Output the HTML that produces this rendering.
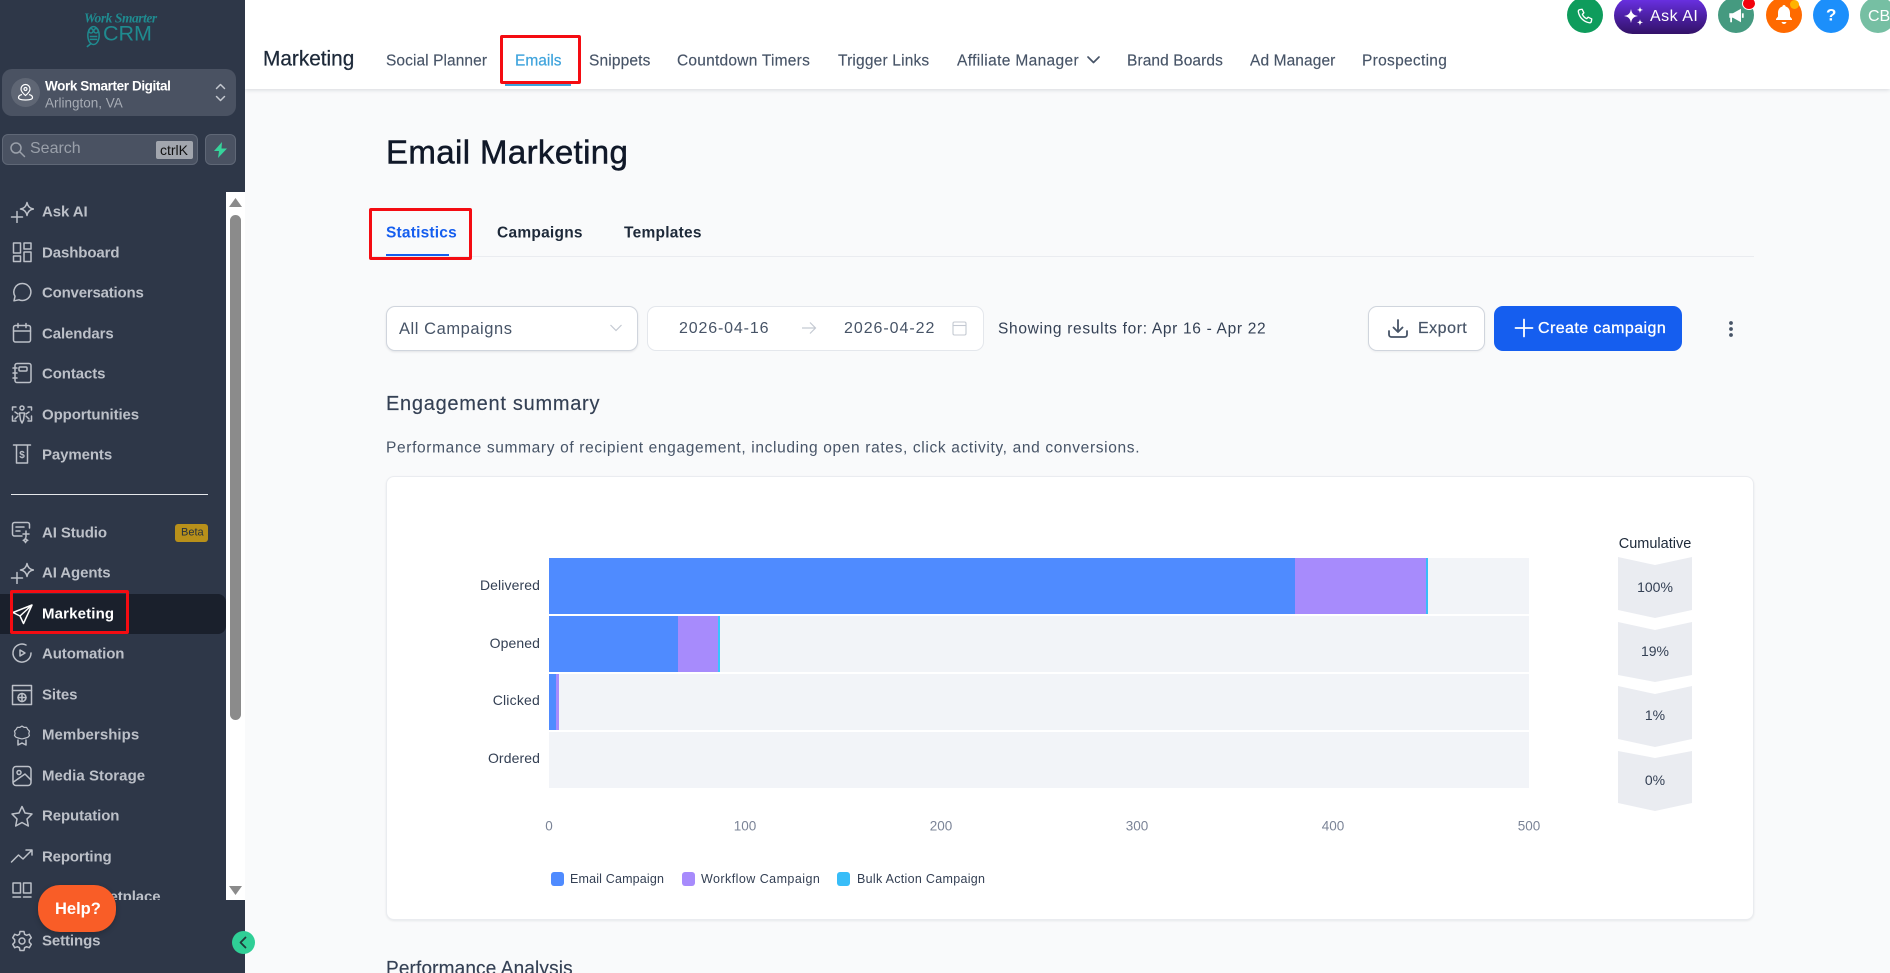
<!DOCTYPE html>
<html lang="en">
<head>
<meta charset="utf-8">
<title>Email Marketing</title>
<style>
html,body{margin:0;padding:0;width:1890px;height:973px;overflow:hidden;background:#f9fafb;font-family:"Liberation Sans",sans-serif}
*{box-sizing:border-box}
#wrap{position:relative;width:1890px;height:973px;overflow:hidden;background:#f9fafb}
.a{position:absolute;white-space:nowrap}
.t{position:absolute;white-space:nowrap;transform:translateY(-50%);line-height:1}
#side{position:absolute;left:0;top:0;width:245px;height:973px;background:#2e3748;overflow:hidden}
.ni{position:absolute;left:42px;margin-top:1px;transform:translateY(-50%);font-size:15px;font-weight:700;color:#bcc0c8;line-height:1;white-space:nowrap;letter-spacing:-.1px}
.ic{position:absolute;left:10px;width:24px;height:24px;fill:none;stroke:#bcc0c8;stroke-width:1.5;stroke-linecap:round;stroke-linejoin:round}
.nav{position:absolute;top:61px;transform:translateY(-50%);font-size:15.5px;color:#475467;line-height:1;white-space:nowrap;-webkit-text-stroke:.15px #475467}
.row{position:absolute;left:549px;width:980px;height:56px;background:#f2f4f8}
.seg{position:absolute;top:0;height:100%}
.yl{position:absolute;right:1350px;transform:translateY(-50%);font-size:14px;color:#344054;line-height:1;letter-spacing:.1px}
.xl{position:absolute;top:826px;transform:translate(-50%,-50%);font-size:13.5px;color:#7b8497;line-height:1}
.lg{position:absolute;top:879px;transform:translateY(-50%);font-size:12.5px;color:#344054;line-height:1;white-space:nowrap;letter-spacing:.25px}
.sw{position:absolute;top:872px;width:13px;height:14px;border-radius:3px}
.cv{position:absolute;left:1618px;width:74px;text-align:center;transform:translateY(-50%);font-size:13.5px;color:#344054;line-height:1}
.circ{position:absolute;top:-3px;width:36px;height:36px;border-radius:50%}
</style>
</head>
<body>
<div id="wrap">

<!-- Top nav -->
<div class="a" style="left:245px;top:0;width:1645px;height:89px;background:#fff;box-shadow:0 1px 4px rgba(16,24,40,.14)"></div>
<div class="t" style="left:263px;top:60px;font-size:20.8px;font-weight:400;color:#1d2939;-webkit-text-stroke:.25px #1d2939">Marketing</div>
<div class="nav" style="left:386px;letter-spacing:.08px">Social Planner</div>
<div class="nav" style="left:515px;color:#3ea3dc;-webkit-text-stroke:.2px #3ea3dc">Emails</div>
<div class="nav" style="left:589px;letter-spacing:.15px">Snippets</div>
<div class="nav" style="left:677px;letter-spacing:.24px">Countdown Timers</div>
<div class="nav" style="left:838px;letter-spacing:.18px">Trigger Links</div>
<div class="nav" style="left:957px;letter-spacing:.35px">Affiliate Manager</div>
<svg class="a" style="left:1086px;top:54px" width="15" height="12" viewBox="0 0 15 12" fill="none" stroke="#475467" stroke-width="1.7" stroke-linecap="round" stroke-linejoin="round"><path d="M2 3l5.500 5.500L13 3"/></svg>
<div class="nav" style="left:1127px;letter-spacing:.1px">Brand Boards</div>
<div class="nav" style="left:1250px;letter-spacing:.1px">Ad Manager</div>
<div class="nav" style="left:1362px;letter-spacing:.3px">Prospecting</div>
<div class="a" style="left:505px;top:83px;width:66px;height:3px;background:#3ea3dc"></div>
<div class="a" style="left:500px;top:35px;width:81px;height:49px;border:3.5px solid #f40c12;border-radius:2px"></div>

<!-- Top right icons -->
<div class="circ" style="left:1567px;background:#0e9c5c"></div>
<svg class="a" style="left:1576px;top:7px" width="18" height="18" viewBox="0 0 24 24" fill="none" stroke="#fff" stroke-width="1.8" stroke-linecap="round" stroke-linejoin="round"><path d="M5 3.500l3.200-.5 2.300 4.800-2 1.800c1 2.600 3 4.700 5.800 6l1.900-2 4.800 2.300-.5 3.200c-.3 1.300-1.500 2.100-2.800 1.900C10.200 19.700 4.400 13.900 3.100 6.300 2.900 5 3.700 3.800 5 3.500z"/></svg>
<div class="a" style="left:1614px;top:-3px;width:93px;height:37px;border-radius:19px;background:linear-gradient(180deg,#6d32ea 0%,#4a1fa0 55%,#331268 100%)"></div>
<svg class="a" style="left:1624px;top:5px" width="20" height="22" viewBox="0 0 20 22" fill="#fff"><path d="M7 4c.8 4.500 2.500 6.200 7 7-4.500.8-6.200 2.500-7 7-.8-4.500-2.500-6.200-7-7 4.500-.8 6.200-2.500 7-7z"/><path d="M16 1.500c.3 2.300.9 3 3.200 3.500-2.300.3-3 .9-3.200 3.500-.3-2.600-.9-3.200-3.200-3.500 2.300-.5 2.900-1.200 3.200-3.500zM16 14c.3 2.300.9 3 3.200 3.500-2.300.3-3 .9-3.200 3.500-.3-2.600-.9-3.200-3.200-3.500 2.300-.5 2.900-1.200 3.200-3.500z"/></svg>
<div class="t" style="left:1650px;top:17px;font-size:16px;color:#fff;letter-spacing:.5px">Ask AI</div>
<div class="circ" style="left:1718px;background:#459a80"></div>
<svg class="a" style="left:1728px;top:7px" width="17" height="18" viewBox="0 0 18 20"><path d="M1 7h4l9-5v15l-9-5H4v5H2v-5H1z" fill="#fff"/><rect x="15" y="7" width="2" height="5" fill="#fff"/></svg>
<div class="a" style="left:1742px;top:-3px;width:14px;height:13px;border-radius:50%;background:#f2020c;border:1px solid #fff"></div>
<div class="circ" style="left:1766px;background:#ff6a00"></div>
<svg class="a" style="left:1774px;top:4px" width="20" height="22" viewBox="0 0 20 22" fill="#fff"><path d="M10 1c1 0 1.600.7 1.600 1.500C14.500 3.300 16 5.800 16 8.800v3.700l2 2.500v1H2v-1l2-2.500V8.800c0-3 1.500-5.500 4.400-6.300C8.400 1.700 9 1 10 1z"/><path d="M7.500 18h5c-.4 1.200-1.300 2-2.500 2s-2.100-.8-2.500-2z"/></svg>
<div class="a" style="left:1790px;top:0;width:9px;height:9px;border-radius:50%;background:#ffb300"></div>
<div class="circ" style="left:1813px;background:#1c8ffb"></div>
<div class="t" style="left:1826px;top:15px;font-size:17px;font-weight:700;color:#fff">?</div>
<div class="circ" style="left:1860px;background:#76bfa3"></div>
<div class="t" style="left:1868px;top:17px;font-size:16px;color:#fff">CB</div>

<!-- Main header -->
<div class="t" style="left:386px;top:152px;font-size:33px;color:#101828;-webkit-text-stroke:.5px #101828;letter-spacing:.38px">Email Marketing</div>
<div class="a" style="left:369px;top:256px;width:1385px;height:1px;background:#eaecf0"></div>
<div class="t" style="left:386px;top:233px;font-size:15.5px;font-weight:700;color:#155eef;letter-spacing:.2px">Statistics</div>
<div class="t" style="left:497px;top:233px;font-size:15.5px;font-weight:700;color:#1d2939;letter-spacing:.25px">Campaigns</div>
<div class="t" style="left:624px;top:233px;font-size:15.5px;font-weight:700;color:#1d2939;letter-spacing:.25px">Templates</div>
<div class="a" style="left:386px;top:254px;width:63px;height:2px;background:#155eef"></div>
<div class="a" style="left:369px;top:208px;width:103px;height:52px;border:3.5px solid #f40c12;border-radius:2px"></div>

<!-- Filters -->
<div class="a" style="left:386px;top:306px;width:252px;height:45px;background:#fff;border:1px solid #d0d5dd;border-radius:9px;box-shadow:0 1px 2px rgba(16,24,40,.1)"></div>
<div class="t" style="left:399px;top:329px;font-size:16.5px;color:#475467;letter-spacing:.55px">All Campaigns</div>
<svg class="a" style="left:609px;top:323px" width="14" height="10" viewBox="0 0 14 10" fill="none" stroke="#c4c9d2" stroke-width="1.2"><path d="M1.500 2l5.500 5.500L12.500 2"/></svg>
<div class="a" style="left:647px;top:306px;width:337px;height:45px;background:#fff;border:1px solid #e4e7ec;border-radius:9px"></div>
<div class="t" style="left:679px;top:329px;font-size:16px;color:#475467;letter-spacing:.85px">2026-04-16</div>
<svg class="a" style="left:801px;top:321px" width="16" height="14" viewBox="0 0 16 14" fill="none" stroke="#c4c9d2" stroke-width="1.2"><path d="M1 7h13.500M9 1.500L14.500 7 9 12.500"/></svg>
<div class="t" style="left:844px;top:329px;font-size:16px;color:#475467;letter-spacing:.95px">2026-04-22</div>
<svg class="a" style="left:952px;top:321px" width="15" height="15" viewBox="0 0 15 15" fill="none" stroke="#c4c9d2" stroke-width="1.1"><rect x="1" y="1" width="13" height="13" rx="1.500"/><path d="M1 4.500h13"/></svg>
<div class="t" style="left:998px;top:329px;font-size:15.5px;color:#344054;letter-spacing:.68px">Showing results for: Apr 16 - Apr 22</div>

<div class="a" style="left:1368px;top:306px;width:117px;height:45px;background:#fff;border:1px solid #d0d5dd;border-radius:9px;box-shadow:0 1px 2px rgba(16,24,40,.06)"></div>
<svg class="a" style="left:1387px;top:318px" width="22" height="22" viewBox="0 0 22 22" fill="none" stroke="#475467" stroke-width="1.800" stroke-linecap="round" stroke-linejoin="round"><path d="M2 13v3.500c0 1.400 1 2.500 2.500 2.500h13c1.500 0 2.500-1.100 2.500-2.500V13M11 2v12M6.500 9.500L11 14l4.500-4.500"/></svg>
<div class="t" style="left:1418px;top:329px;font-size:16px;color:#475467;-webkit-text-stroke:.2px #475467;letter-spacing:.5px">Export</div>
<div class="a" style="left:1494px;top:306px;width:188px;height:45px;background:#155eef;border-radius:9px"></div>
<svg class="a" style="left:1514px;top:318px" width="20" height="20" viewBox="0 0 20 20" fill="none" stroke="#fff" stroke-width="1.800" stroke-linecap="round"><path d="M10 1.500v17M1.500 10h17"/></svg>
<div class="t" style="left:1538px;top:329px;font-size:16px;color:#fff;font-weight:400;-webkit-text-stroke:.3px #fff;letter-spacing:.42px">Create campaign</div>
<svg class="a" style="left:1727px;top:320px" width="8" height="18" viewBox="0 0 8 18" fill="#475467"><circle cx="4" cy="3" r="1.900"/><circle cx="4" cy="9" r="1.900"/><circle cx="4" cy="15" r="1.900"/></svg>

<div class="t" style="left:386px;top:404px;font-size:20px;color:#344054;letter-spacing:.72px;-webkit-text-stroke:.15px #344054">Engagement summary</div>
<div class="t" style="left:386px;top:448px;font-size:15.500px;color:#475467;letter-spacing:.65px">Performance summary of recipient engagement, including open rates, click activity, and conversions.</div>

<!-- Chart card -->
<div class="a" style="left:386px;top:476px;width:1368px;height:444px;background:#fff;border:1px solid #eaecf0;border-radius:8px;box-shadow:0 1px 2px rgba(16,24,40,.08)"></div>
<div class="row" style="top:558px"><div class="seg" style="left:0;width:746px;background:#4f8bff"></div><div class="seg" style="left:746px;width:131px;background:#a78bfc"></div><div class="seg" style="left:877px;width:1.500px;background:#38bdf8"></div></div>
<div class="row" style="top:616px"><div class="seg" style="left:0;width:129px;background:#4f8bff"></div><div class="seg" style="left:129px;width:40px;background:#a78bfc"></div><div class="seg" style="left:169px;width:2px;background:#38c5ff"></div></div>
<div class="row" style="top:674px"><div class="seg" style="left:0;width:7px;background:#4f8bff"></div><div class="seg" style="left:7px;width:3px;background:#a78bfc"></div></div>
<div class="row" style="top:732px"></div>

<div class="yl" style="top:585px">Delivered</div>
<div class="yl" style="top:643px">Opened</div>
<div class="yl" style="top:700px;letter-spacing:.2px">Clicked</div>
<div class="yl" style="top:758px">Ordered</div>
<div class="xl" style="left:549px">0</div>
<div class="xl" style="left:745px">100</div>
<div class="xl" style="left:941px">200</div>
<div class="xl" style="left:1137px">300</div>
<div class="xl" style="left:1333px">400</div>
<div class="xl" style="left:1529px">500</div>

<div class="sw" style="left:551px;background:#4f8bff"></div><div class="lg" style="left:570px;letter-spacing:.17px">Email Campaign</div>
<div class="sw" style="left:682px;background:#a78bfc"></div><div class="lg" style="left:701px;letter-spacing:.45px">Workflow Campaign</div>
<div class="sw" style="left:837px;background:#38bdf8"></div><div class="lg" style="left:857px;letter-spacing:.3px">Bulk Action Campaign</div>

<div class="cv" style="top:544px;color:#1d2939;left:1613px;width:84px;font-size:14.500px">Cumulative</div>
<svg class="a" style="left:1618px;top:557px" width="74" height="256" viewBox="0 0 74 256" fill="#eaecf1"><path d="M0 0l37 8 37-8v53l-37 8-37-8z"/><path d="M0 65l37 8 37-8v53l-37 7-37-7z"/><path d="M0 129l37 8 37-8v53l-37 8-37-8z"/><path d="M0 194l37 7 37-7v52l-37 8-37-8z"/></svg>
<div class="cv" style="top:587px;font-size:14px">100%</div>
<div class="cv" style="top:651px;font-size:14px">19%</div>
<div class="cv" style="top:715px;font-size:14px">1%</div>
<div class="cv" style="top:780px;font-size:14px">0%</div>

<div class="t" style="left:386px;top:969px;font-size:19px;color:#344054;letter-spacing:.15px;-webkit-text-stroke:.15px #344054">Performance Analysis</div>

<!-- Sidebar -->
<div id="side">
  <div class="t" style="left:84px;top:18px;font-family:'Liberation Serif',serif;font-style:italic;font-weight:700;font-size:13.5px;color:#1f8a8f;letter-spacing:-.45px">Work Smarter</div>
  <svg class="a" style="left:85px;top:25px" width="17" height="23" viewBox="0 0 18 24" fill="none" stroke="#1f8a8f" stroke-width="1.600"><ellipse cx="9" cy="11" rx="6" ry="9.500"/><circle cx="6.300" cy="6" r="2.300"/><circle cx="11.700" cy="6" r="2.300"/><path d="M5 12h8M5 15h8M2 23l5-4"/></svg>
  <div class="t" style="left:103px;top:34px;font-size:21.500px;color:#1f8a8f">CRM</div>

  <div class="a" style="left:2px;top:69px;width:234px;height:47px;background:#4a5262;border-radius:10px"></div>
  <div class="a" style="left:11px;top:78px;width:29px;height:29px;border-radius:50%;background:#5f6674"></div>
  <svg class="a" style="left:17px;top:83px" width="17" height="19" viewBox="0 0 17 19" fill="none" stroke="#fff" stroke-width="1.200"><path d="M8.500 1.500a4.500 4.500 0 0 1 4.500 4.500c0 3-4.500 6.500-4.500 6.500S4 9 4 6a4.500 4.500 0 0 1 4.500-4.500z"/><circle cx="8.500" cy="6" r="1.500"/><path d="M5 11.500C3 12 1.500 13 1.500 14.500c0 1.800 3 2.500 7 2.500s7-.7 7-2.500c0-1.500-1.500-2.500-3.500-3"/></svg>
  <div class="t" style="left:45px;top:86px;font-size:13.500px;font-weight:700;color:#fff;letter-spacing:-.39px">Work Smarter Digital</div>
  <div class="t" style="left:45px;top:103px;font-size:13.500px;color:#a7acb5">Arlington, VA</div>
  <svg class="a" style="left:214px;top:82px" width="13" height="21" viewBox="0 0 13 21" fill="none" stroke="#c4c8cf" stroke-width="1.500" stroke-linecap="round" stroke-linejoin="round"><path d="M2.500 6.500L6.500 2.500l4 4M2.500 14.500l4 4 4-4"/></svg>

  <div class="a" style="left:2px;top:134px;width:196px;height:31px;background:#4a5262;border:1px solid #5f6776;border-radius:6px"></div>
  <svg class="a" style="left:9px;top:141px" width="17" height="17" viewBox="0 0 17 17" fill="none" stroke="#9aa0aa" stroke-width="1.500" stroke-linecap="round"><circle cx="7" cy="7" r="5"/><path d="M11 11l4.500 4.500"/></svg>
  <div class="t" style="left:30px;top:149px;font-size:16px;color:#9aa0aa">Search</div>
  <div class="a" style="left:156px;top:141px;width:37px;height:18px;background:#a2a6ae;border-radius:2px"></div>
  <div class="t" style="left:160px;top:150px;font-size:14px;color:#111">ctrlK</div>
  <div class="a" style="left:205px;top:134px;width:31px;height:31px;background:#4a5262;border:1px solid #5f6776;border-radius:6px"></div>
  <svg class="a" style="left:214px;top:142px" width="13" height="16" viewBox="0 0 13 16" fill="#36d39b"><path d="M8 0L0 9h5l-1 7 9-9.500H7.500z"/></svg>

  <!-- scrollbar -->
  <div class="a" style="left:226px;top:192px;width:19px;height:708px;background:#fff"></div>
  <div class="a" style="left:230px;top:215px;width:11px;height:505px;background:#8b8b8b;border-radius:6px"></div>
  <svg class="a" style="left:229px;top:198px" width="13" height="10"><path d="M6.500 0L13 9H0z" fill="#8b8b8b"/></svg>
  <svg class="a" style="left:229px;top:886px" width="13" height="10"><path d="M0 0h13L6.500 9z" fill="#8b8b8b"/></svg>

  <!-- active -->
  <div class="a" style="left:0;top:594px;width:226px;height:40px;background:#1a202c;border-radius:0 8px 8px 0"></div>

  <!-- items -->
  <svg class="ic" style="top:199px" viewBox="0 0 24 24"><path d="M17 3.500c.6 3.300 2.200 5.900 6.500 6.500-4.300.6-5.900 3.200-6.500 6.500-.6-3.300-2.200-5.900-6.500-6.500 4.300-.6 5.900-3.200 6.500-6.500zM7 12.500v11M1.500 18h11"/></svg>
  <div class="ni" style="top:211px">Ask AI</div>
  <svg class="ic" style="top:240px" viewBox="0 0 24 24"><rect x="3.500" y="3" width="7" height="10"/><rect x="14" y="3" width="7" height="6"/><rect x="3.500" y="16" width="7" height="5.500"/><rect x="14" y="12" width="7" height="9.500"/></svg>
  <div class="ni" style="top:252px">Dashboard</div>
  <svg class="ic" style="top:280px" viewBox="0 0 24 24"><path d="M12.500 3.500a8.500 8.500 0 1 1-3.500 16.300l-5 1 1-4.500a8.500 8.500 0 0 1 7.500-12.800z"/></svg>
  <div class="ni" style="top:292px;letter-spacing:-.2px">Conversations</div>
  <svg class="ic" style="top:321px" viewBox="0 0 24 24"><rect x="3.500" y="4.500" width="17" height="16.500" rx="2"/><path d="M3.500 10h17M8 2.500v4M16 2.500v4"/></svg>
  <div class="ni" style="top:333px">Calendars</div>
  <svg class="ic" style="top:361px" viewBox="0 0 24 24"><rect x="5" y="2.500" width="16" height="19" rx="2"/><rect x="9" y="6" width="8" height="4" rx="1"/><path d="M3 7h4M3 12h4M3 17h4"/></svg>
  <div class="ni" style="top:373px">Contacts</div>
  <svg class="ic" style="top:402px" viewBox="0 0 24 24"><circle cx="12" cy="6" r="2"/><path d="M9.500 11h5l-1 7-1.500 3-1.500-3zM2.500 8V5h3.500M21.500 8V5H18M2.500 14v5H6M21.500 14v5H18M5 10l3 2M19 10l-3 2M5 17l3-3M19 17l-3-3"/></svg>
  <div class="ni" style="top:414px">Opportunities</div>
  <svg class="ic" style="top:442px" viewBox="0 0 24 24"><path d="M3.500 3h17M6.500 3v18h11V3"/><text x="12" y="16" font-size="10" font-weight="700" fill="#bcc0c8" stroke="none" text-anchor="middle">$</text></svg>
  <div class="ni" style="top:454px">Payments</div>

  <div class="a" style="left:11px;top:493.500px;width:197px;height:1px;background:#e5e7eb"></div>

  <svg class="ic" style="top:520px" viewBox="0 0 24 24"><path d="M12 16H4.500A2 2 0 0 1 2.500 14V4.500a2 2 0 0 1 2-2h13a2 2 0 0 1 2 2V8"/><path d="M6 7h8M6 11h4M16 11v6M13 14h6M15.500 18c.3 1.500.8 2 2.300 2.300-1.500.3-2 .8-2.300 2.300-.3-1.500-.8-2-2.300-2.300 1.500-.3 2-.8 2.300-2.300z"/></svg>
  <div class="ni" style="top:532px">AI Studio</div>
  <div class="a" style="left:175px;top:524px;width:33px;height:18px;background:#b8901a;border-radius:3px"></div>
  <div class="t" style="left:181px;top:533px;font-size:11px;color:#26313f">Beta</div>
  <svg class="ic" style="top:560px" viewBox="0 0 24 24"><path d="M17 3.500c.6 3.300 2.200 5.900 6.500 6.500-4.300.6-5.900 3.200-6.500 6.500-.6-3.300-2.200-5.900-6.500-6.500 4.300-.6 5.900-3.200 6.500-6.500zM7 12.500v11M1.500 18h11"/></svg>
  <div class="ni" style="top:572px">AI Agents</div>
  <svg class="ic" style="top:602px;stroke:#fff" viewBox="0 0 24 24"><path d="M22 3L3 10.500l7 3.500 3.500 7.500zM22 3L10 14"/></svg>
  <div class="ni" style="top:613px;color:#fff;letter-spacing:.15px">Marketing</div>
  <svg class="ic" style="top:641px" viewBox="0 0 24 24"><path d="M21 12a9 9 0 1 1-5-8M9 20.500"/><path d="M10 9l5 3-5 3z"/></svg>
  <div class="ni" style="top:653px">Automation</div>
  <svg class="ic" style="top:683px" viewBox="0 0 24 24"><rect x="2.500" y="2.500" width="19" height="19"/><path d="M2.500 7.500h19"/><circle cx="12" cy="14.500" r="4"/><path d="M8 14.500h8M12 10.500v8"/></svg>
  <div class="ni" style="top:694px">Sites</div>
  <svg class="ic" style="top:723px" viewBox="0 0 24 24"><path d="M12 2.500l2.500 1.500h3l1.500 2.500 2 2-.7 3 .7 2.500-2 2-3 1-4 1-4-1-3-1-2-2 .7-2.500-.7-3 2-2 1.500-2.500h3z" transform="translate(2 1) scale(.83)"/><path d="M8 17v5l4-2 4 2v-5"/></svg>
  <div class="ni" style="top:734px;letter-spacing:.05px">Memberships</div>
  <svg class="ic" style="top:764px" viewBox="0 0 24 24"><rect x="3" y="2.500" width="18" height="19" rx="3"/><circle cx="9" cy="8.500" r="2"/><path d="M3.500 18L15 10l6 6"/></svg>
  <div class="ni" style="top:775px;letter-spacing:.05px">Media Storage</div>
  <svg class="ic" style="top:804px" viewBox="0 0 24 24"><path d="M12 2.500l3 6.500 7 1-5 5 1.300 7L12 18.500 5.700 22 7 15l-5-5 7-1z"/></svg>
  <div class="ni" style="top:815px">Reputation</div>
  <svg class="ic" style="top:844px" viewBox="0 0 24 24"><path d="M1.500 18l7-7 4.500 4 9-9M16 6h6v5"/></svg>
  <div class="ni" style="top:856px;letter-spacing:-.15px">Reporting</div>
  <div class="a" style="left:0;top:880px;width:226px;height:20px;overflow:hidden">
    <svg class="ic" style="top:0" viewBox="0 0 24 24"><rect x="3" y="3" width="7.500" height="10"/><rect x="13.500" y="3" width="7.500" height="10"/><path d="M3 17h7.500M13.500 17h7.500"/></svg>
    <div class="ni" style="top:16px">App Marketplace</div>
  </div>
  <svg class="ic" style="top:929px" viewBox="0 0 24 24"><circle cx="12" cy="12" r="3"/><path d="M10 2.500h4l.6 2.800 2 1 2.700-1 2 3.400-2 2v2.600l2 2-2 3.400-2.700-1-2 1-.6 2.800h-4l-.6-2.800-2-1-2.700 1-2-3.400 2-2v-2.600l-2-2 2-3.400 2.700 1 2-1z"/></svg>
  <div class="ni" style="top:940px">Settings</div>

  <div class="a" style="left:38px;top:885px;width:78px;height:47px;background:#f95d27;border-radius:22px;box-shadow:0 2px 6px rgba(0,0,0,.2)"></div>
  <div class="t" style="left:55px;top:909px;font-size:16.500px;font-weight:700;color:#fff">Help?</div>
  <div class="a" style="left:10px;top:590px;width:119px;height:44px;border:3.500px solid #f40c12;border-radius:2px"></div>
</div>

<!-- collapse button -->
<div class="a" style="left:232px;top:931px;width:23px;height:23px;border-radius:50%;background:#2fcf96"></div>
<svg class="a" style="left:238px;top:936px" width="10" height="13" viewBox="0 0 10 13" fill="none" stroke="#1f3a3a" stroke-width="1.800" stroke-linecap="round" stroke-linejoin="round"><path d="M7.500 1.500L2.500 6.500l5 5"/></svg>

</div>
</body>
</html>
